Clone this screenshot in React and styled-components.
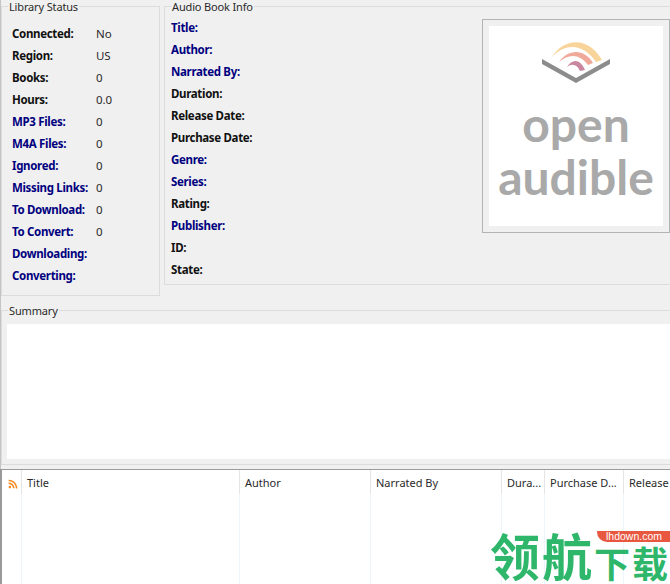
import React from 'react'
import styled, { createGlobalStyle } from 'styled-components'
import { FaRss } from 'react-icons/fa'

const navy = '#00007f'

const GlobalStyle = createGlobalStyle`
  html, body {
    margin: 0;
    padding: 0;
    background: #f0f0f0;
  }
  * {
    box-sizing: border-box;
  }
`

const Page = styled.div`
  position: relative;
  width: 670px;
  height: 584px;
  overflow: hidden;
  display: flex;
  flex-direction: column;
  background: #f0f0f0;
  box-shadow: inset 1px 0 #c4c4c4;
  color: #222;
  font-family: "Noto Sans", "Open Sans", sans-serif;
  font-size: 11px;
`

const TopRow = styled.div`
  display: flex;
  align-items: flex-start;
  height: 304px;
  padding-left: 1px;
  gap: 4px;
`

const Group = styled.fieldset`
  margin: 0;
  padding: 0;
  min-width: 0;
  border: 1px solid #dcdcdc;
  legend {
    margin-left: 6px;
    padding: 1px 1px 0;
    font-size: 11px;
    line-height: 12px;
    letter-spacing: -0.15px;
    color: #2a2a2a;
  }
`

const LibraryGroup = styled(Group)`
  flex: 0 0 159px;
  height: 296px;
`

const AudioGroup = styled(Group)`
  flex: 0 0 520px;
  height: 285px;
`

const GroupBody = styled.div`
  display: flex;
  align-items: flex-start;
  padding: ${p => p.$top}px 0 0 ${p => p.$left}px;
`

const Rows = styled.div`
  display: grid;
  grid-template-columns: ${p => p.$labelWidth}px 1fr;
  grid-auto-rows: 22px;
  align-items: center;
  flex: 1;
`

const Label = styled.span`
  font-weight: 700;
  font-size: 11.5px;
  letter-spacing: -0.33px;
  color: ${p => (p.$link ? navy : '#111')};
`

const Value = styled.span`
  font-size: 11.5px;
  letter-spacing: -0.1px;
  color: #2a2a2a;
`

const Cover = styled.div`
  flex: 0 0 188px;
  height: 214px;
  margin: 3px 13px 0 0;
  padding: 6px;
  background: #f0f0f0;
  border: 1px solid #b4b4b8;
`

const CoverArt = styled.div`
  height: 100%;
  background: #fff;
  display: flex;
  flex-direction: column;
  align-items: center;
  padding-top: 15px;
  svg {
    display: block;
  }
`

const LogoText = styled.div`
  margin-top: ${p => p.$top}px;
  font-family: Lato, "Noto Sans", sans-serif;
  font-weight: 700;
  font-size: 48px;
  line-height: 50px;
  color: #a9a9a9;
`

const SummaryGroup = styled(Group)`
  height: 161px;
  margin-left: 1px;
  margin-right: -4px;
`

const SummaryBox = styled.div`
  height: 135px;
  margin: 7px 0 0 5px;
  background: #fff;
`

const List = styled.div`
  flex: 1;
  margin-top: 4px;
  display: flex;
  flex-direction: column;
  background: #fff;
  border-top: 1px solid #9a9a9a;
  border-left: 2px solid #9a9a9a;
`

const Columns = styled.div`
  display: flex;
  height: ${p => p.$height}px;
  flex: ${p => (p.$grow ? 1 : 'none')};
`

const HeaderCell = styled.div`
  flex: 0 0 ${p => p.$width}px;
  display: flex;
  align-items: center;
  padding: 0 0 0 5px;
  border-right: 1px solid #e5e5e5;
  color: #2a2a2a;
  white-space: nowrap;
  overflow: hidden;
  svg {
    margin: 3px 0 0 1px;
    color: #f5891f;
  }
`

const BodyCell = styled.div`
  flex: 0 0 ${p => p.$width}px;
  border-right: 1px solid #eef4fb;
`

const Watermark = styled.div`
  position: absolute;
  left: 490px;
  top: 520px;
  width: 200px;
  font-family: "Noto Sans CJK SC", sans-serif;
  font-weight: 700;
  font-size: 50px;
  line-height: 68px;
  letter-spacing: 2px;
  white-space: nowrap;
  color: #2eb76a;
`

const SmallGlyphs = styled.span`
  font-size: 36px;
  letter-spacing: 2px;
  position: relative;
  top: 2px;
`

const Badge = styled.div`
  position: absolute;
  left: 597px;
  top: 531px;
  width: 80px;
  height: 11px;
  padding-left: 9px;
  border-bottom-left-radius: 10px;
  background: #e8573f;
  color: #fff;
  font-family: "Liberation Sans", sans-serif;
  font-size: 10.5px;
  line-height: 11px;
`

const library = [
  ['Connected:', 'No'],
  ['Region:', 'US'],
  ['Books:', '0'],
  ['Hours:', '0.0'],
  ['MP3 Files:', '0', true],
  ['M4A Files:', '0', true],
  ['Ignored:', '0', true],
  ['Missing Links:', '0', true],
  ['To Download:', '0', true],
  ['To Convert:', '0', true],
  ['Downloading:', '', true],
  ['Converting:', '', true],
]

const audio = [
  ['Title:', true],
  ['Author:', true],
  ['Narrated By:', true],
  ['Duration:'],
  ['Release Date:'],
  ['Purchase Date:'],
  ['Genre:', true],
  ['Series:', true],
  ['Rating:'],
  ['Publisher:', true],
  ['ID:'],
  ['State:'],
]

const columns = [
  { width: 20, icon: true },
  { width: 218, title: 'Title' },
  { width: 131, title: 'Author' },
  { width: 131, title: 'Narrated By' },
  { width: 43, title: 'Dura...' },
  { width: 79, title: 'Purchase D...' },
  { width: 60, title: 'Release' },
]

const BookLogo = () => (
  <svg width="68" height="43" viewBox="0 0 68 43">
    <path d="M10 16C22 -3 46 -5 60 19L54 21C42 3 24 1 10 16Z" fill="#f8d49a" />
    <path d="M17 21C26 8 42 7 51 22L46 24C38 13 27 12 17 21Z" fill="#f0a898" />
    <path d="M25 26C30 18 38 17 43 29L38 30C35 23 30 22 25 26Z" fill="#c9869f" />
    <polygon points="0,18 34,37 68,18 68,23 34,42 0,23" fill="#8c8c8c" />
  </svg>
)

const App = () => {
  return (
    <Page>
      <GlobalStyle />
      <TopRow>
        <LibraryGroup>
          <legend>Library Status</legend>
          <GroupBody $top={9} $left={10}>
            <Rows $labelWidth={84}>
              {library.map(([label, value, link]) => (
                <React.Fragment key={label}>
                  <Label $link={link}>{label}</Label>
                  <Value>{value}</Value>
                </React.Fragment>
              ))}
            </Rows>
          </GroupBody>
        </LibraryGroup>
        <AudioGroup>
          <legend>Audio Book Info</legend>
          <GroupBody $top={3} $left={6}>
            <Rows $labelWidth={120}>
              {audio.map(([label, link]) => (
                <React.Fragment key={label}>
                  <Label $link={link}>{label}</Label>
                  <Value />
                </React.Fragment>
              ))}
            </Rows>
            <Cover>
              <CoverArt>
                <BookLogo />
                <LogoText $top={15}>open</LogoText>
                <LogoText $top={3}>audible</LogoText>
              </CoverArt>
            </Cover>
          </GroupBody>
        </AudioGroup>
      </TopRow>
      <SummaryGroup>
        <legend>Summary</legend>
        <SummaryBox />
      </SummaryGroup>
      <List>
        <Columns $height={24}>
          {columns.map((c, i) => (
            <HeaderCell key={i} $width={c.width}>
              {c.icon ? <FaRss size={10} /> : c.title}
            </HeaderCell>
          ))}
        </Columns>
        <Columns $grow>
          {columns.map((c, i) => (
            <BodyCell key={i} $width={c.width} />
          ))}
        </Columns>
      </List>
      <Watermark>
        领航<SmallGlyphs>下载</SmallGlyphs>
      </Watermark>
      <Badge>lhdown.com</Badge>
    </Page>
  )
}

export default App
